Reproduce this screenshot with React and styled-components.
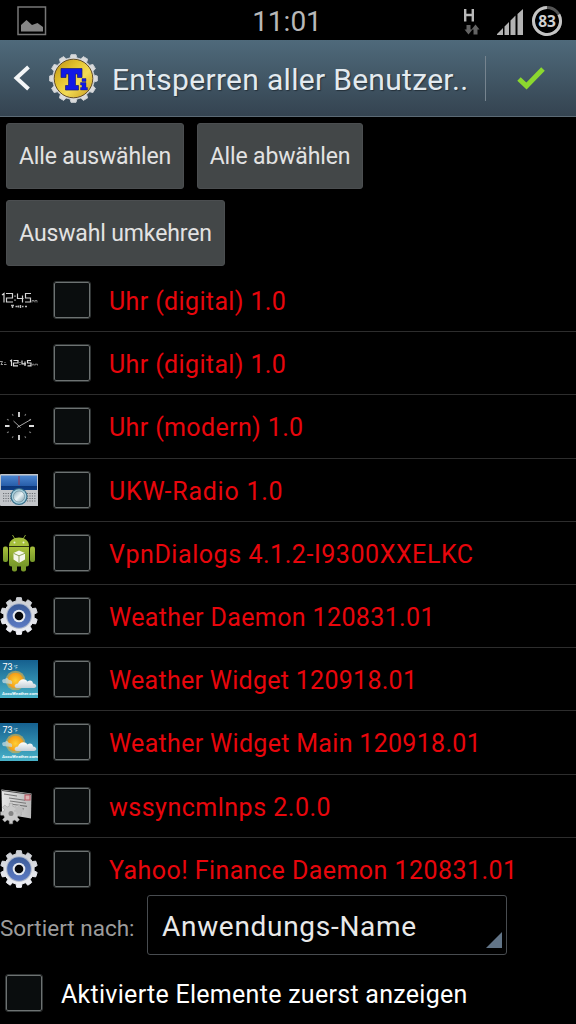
import React, { useState } from 'react';
import styled, { createGlobalStyle } from 'styled-components';

// styles
const GlobalStyle = createGlobalStyle`
  * {
    box-sizing: border-box;
  }
  body {
    margin: 0;
    background: #000;
    font-family: Roboto, 'Noto Sans', sans-serif;
  }
`

const Screen = styled.div`
  display: flex;
  flex-direction: column;
  width: 576px;
  height: 1024px;
  overflow: hidden;
  background: #000;
`

const StatusBar = styled.div`
  display: grid;
  grid-template-columns: 1fr auto 1fr;
  align-items: center;
  height: 40px;
  flex: none;
  padding: 0 13px 0 17px;
`

const StatusIcons = styled.div`
  display: flex;
  align-items: center;
  justify-content: flex-end;
`

const Clock = styled.span`
  color: #b8b8b8;
  font-size: 28px;
  line-height: 40px;
  padding: 2px 6px 0 0;
`

const Header = styled.header`
  display: flex;
  align-items: center;
  height: 77px;
  flex: none;
  padding-left: 12px;
  background: linear-gradient(#4f6a7b, #344350);
  border-bottom: 1px solid #5c6a75;
`

const BackArrow = styled.svg`
  width: 24px;
  height: 28px;
  flex: none;
  margin-right: 12px;
`

const Title = styled.h1`
  flex: 1;
  margin: 2px 0 0 13px;
  color: #e3eaef;
  font-size: 30px;
  font-weight: 400;
  letter-spacing: 0.3px;
  white-space: nowrap;
  text-shadow: 1px 1px 1px #24303a;
`

const Confirm = styled.button`
  display: flex;
  align-items: center;
  justify-content: center;
  width: 91px;
  height: 45px;
  flex: none;
  padding: 0;
  border: 0;
  border-left: 1px solid #76848f;
  background: none;
`

const Actions = styled.div`
  display: flex;
  flex-wrap: wrap;
  align-content: flex-start;
  gap: 11px 13px;
  height: 152px;
  flex: none;
  padding: 6px 6px 0;
`

const ActionButton = styled.button`
  width: ${props => props.$width}px;
  height: 66px;
  padding: 0;
  border: 1px solid #4b4e50;
  border-radius: 3px;
  background: #434748;
  color: #e2e2e2;
  font-family: inherit;
  font-size: 23px;
  letter-spacing: -0.14px;
  white-space: nowrap;
`

const List = styled.ul`
  height: 620px;
  flex: none;
  margin: 0;
  padding: 0;
  list-style: none;
  overflow: hidden;
`

const Row = styled.li`
  display: flex;
  align-items: center;
  height: 63.2px;
  border-bottom: 1px solid #2d2d2d;
`

const RowIcon = styled.svg`
  width: 38px;
  height: 38px;
  flex: none;
  margin-right: 16px;
`

const Box = styled.button`
  width: 36px;
  height: 36px;
  flex: none;
  padding: 0;
  border: 1px solid #6d7272;
  border-radius: 2px;
  outline: 1px solid #303434;
  background: ${props => (props.$checked ? '#6fae2c' : '#0a0d0e')};
`

const AppName = styled.span`
  margin: 3px 0 0 19px;
  color: #e8060c;
  font-size: 25px;
  letter-spacing: ${props => props.$spacing}px;
  white-space: nowrap;
`

const SortBar = styled.div`
  display: flex;
  align-items: center;
  height: 72px;
  flex: none;
  gap: 12px;
`

const SortLabel = styled.span`
  width: 135px;
  padding-top: 6px;
  color: #9c9c9c;
  font-size: 22.5px;
  white-space: nowrap;
`

const Spinner = styled.div`
  display: flex;
  align-items: center;
  justify-content: space-between;
  width: 360px;
  height: 60px;
  padding: 2px 4px 0 14px;
  border: 1px solid #484c50;
  border-radius: 3px;
  color: #e9e9e9;
  font-size: 28px;
  letter-spacing: 0.7px;
`

const Corner = styled.svg`
  align-self: flex-end;
  width: 16px;
  height: 16px;
  margin-bottom: 6px;
`

const Footer = styled.div`
  display: flex;
  align-items: center;
  height: 63px;
  flex: none;
  padding-left: 6px;
`

const FooterText = styled.span`
  margin: 3px 0 0 19px;
  color: #fff;
  font-size: 25px;
  letter-spacing: 0.28px;
  white-space: nowrap;
`

// Outline of a cog with flat teeth
const cogPath = (cx, cy, outer, inner, teeth) => {
  const step = (Math.PI * 2) / teeth;
  const points = [];
  for (let i = 0; i < teeth; i++) {
    const a = i * step - Math.PI / 2;
    [[-0.31, inner], [-0.2, outer], [0.2, outer], [0.31, inner]].forEach(([f, r]) => {
      const t = a + f * step;
      points.push(`${(cx + r * Math.cos(t)).toFixed(2)} ${(cy + r * Math.sin(t)).toFixed(2)}`);
    });
  }
  return `M${points.join('L')}Z`;
};

const DigitalClock = () => (
  <RowIcon viewBox="0 0 38 38">
    <path
      d="M2 14L4 12.5V21.5M6 12.5H12.5V17H6.5V21H13M15 14.5V15.7M15 18.5V19.7M17.5 12.5V17.5H23.5M22.5 14.5V21.5M31 12.5H25.5V17H30.5V21H25"
      fill="none" stroke="#d4d4d4" strokeWidth="1.2"
    />
    <path d="M32 21.5V19.5H34V21M35 21.5V19.5H37V21.5" fill="none" stroke="#999" strokeWidth=".8" />
    <path d="M11 24.5H14M12.5 24.5V27M15.5 25.5H17.5M18.5 24.5V26.5M20.5 24V27M22 25.5H23.5M25 25.5H27" stroke="#bbb" strokeWidth="1.4" />
  </RowIcon>
)

const DigitalClockSmall = () => (
  <RowIcon viewBox="0 0 38 38">
    <path d="M0 17.5H2.5L1 20.5H3M4 20.5H6.5M4.5 18.5H5.5" fill="none" stroke="#aaa" strokeWidth=".9" />
    <path
      d="M10 17L11.5 16.2V22M13.5 16.5H18V19H13.5V21.8H18M20 18V18.8M20 20V20.8M22 16.5V19.8H26M25 17.5V22M31 16.5H27.5V19H31V21.8H27.5"
      fill="none" stroke="#dcdcdc" strokeWidth="1.2"
    />
    <path d="M32.5 21.5V20.2H34V21.5M35 21.5V20.2H37.5V21.5" fill="none" stroke="#999" strokeWidth=".8" />
  </RowIcon>
)

const AnalogClock = () => (
  <RowIcon viewBox="0 0 38 38">
    <path d="M19 5V10M19 28V33M5 19H9.5M29 19H34" stroke="#ddd" strokeWidth="1.8" />
    <path
      d="M12.2 7L13.2 8.8M25.8 7L24.8 8.8M7 12.2L8.8 13.2M31 12.2L29.2 13.2M7 25.8L8.8 24.8M31 25.8L29.2 24.8M12.2 31L13.2 29.2M25.8 31L24.8 29.2"
      stroke="#777" strokeWidth="1.1"
    />
    <path d="M13.5 14L20.5 20.5M17 20.5L31 12.5" stroke="#a5a5a5" strokeWidth="1" />
  </RowIcon>
)

const Radio = () => (
  <RowIcon viewBox="0 0 38 38">
    <defs>
      <linearGradient id="radioTop" x1="0" y1="0" x2="0" y2="1">
        <stop offset="0" stopColor="#4c86d0" />
        <stop offset=".7" stopColor="#285eaa" />
        <stop offset=".7" stopColor="#0c3474" />
        <stop offset="1" stopColor="#0d3d86" />
      </linearGradient>
      <linearGradient id="radioKnob" x1="0" y1="0" x2="1" y2="1">
        <stop offset="0" stopColor="#7fa4b2" />
        <stop offset=".5" stopColor="#eaf4f6" />
        <stop offset="1" stopColor="#7899a8" />
      </linearGradient>
    </defs>
    <rect x="0" y="3" width="38.5" height="32" rx="1" fill="#c3c6ca" />
    <rect x="1" y="4.5" width="36" height="14.5" fill="url(#radioTop)" />
    <path d="M19 5V14" stroke="#aa3448" strokeWidth="1" />
    <path
      d="M3 22.5H11M3 25H11M3 27.5H11M3 30H11M27 22.5H36M27 25H36M27 27.5H36M27 30H36"
      stroke="#6c7075" strokeWidth="1.1" strokeDasharray="1.2 1.2"
    />
    <circle cx="19" cy="25.5" r="8.6" fill="#39718c" />
    <circle cx="19" cy="25.5" r="7.3" fill="#a9d1de" />
    <circle cx="19" cy="25.5" r="5.6" fill="url(#radioKnob)" stroke="#64828e" strokeWidth=".6" />
  </RowIcon>
)

const Android = () => (
  <RowIcon viewBox="0 0 38 38">
    <defs>
      <linearGradient id="droid" x1="0" y1="0" x2="0" y2="1">
        <stop offset="0" stopColor="#a8c03c" />
        <stop offset="1" stopColor="#759729" />
      </linearGradient>
    </defs>
    <g transform="translate(0 -1)">
      <path d="M12.5 2L15 6M25.5 2L23 6" stroke="#89a236" strokeWidth="1" />
      <rect x="3" y="13.5" width="5" height="15.5" rx="2" fill="url(#droid)" />
      <rect x="30" y="13.5" width="5" height="15.5" rx="2" fill="url(#droid)" />
      <rect x="12" y="29" width="5" height="9.5" rx="2" fill="#799929" />
      <rect x="21" y="29" width="5" height="9.5" rx="2" fill="#799929" />
      <path d="M9 13C9 7.5 13.5 4.5 19 4.5C24.5 4.5 29 7.5 29 13Z" fill="#a5bf3b" />
      <path d="M9 13.7H29V31Q29 33.5 26.5 33.5H11.5Q9 33.5 9 31Z" fill="url(#droid)" />
      <circle cx="14.5" cy="9.5" r="1" fill="#e9efd0" />
      <circle cx="23.5" cy="9.5" r="1" fill="#e9efd0" />
      <path d="M19 17.5L25 20V26.5L19 30L13.5 26.5V20Z" fill="#f5f7ec" />
      <path d="M13.5 20.3L19 22.8L25 20.3M19 22.8V30" fill="none" stroke="#8fa45a" strokeWidth="1" />
    </g>
  </RowIcon>
)

const Cog = () => (
  <RowIcon viewBox="0 0 38 38">
    <defs>
      <linearGradient id="cogBody" x1="0" y1="0" x2="0" y2="1">
        <stop offset="0" stopColor="#c9ccd1" />
        <stop offset="1" stopColor="#f1f2f8" />
      </linearGradient>
      <linearGradient id="cogRing" x1="0" y1="0" x2="0" y2="1">
        <stop offset="0" stopColor="#3c5c98" />
        <stop offset="1" stopColor="#5c7ac4" />
      </linearGradient>
    </defs>
    <path d={cogPath(19, 19, 18.5, 15.2, 10)} fill="url(#cogBody)" stroke="url(#cogBody)" strokeLinejoin="round" />
    <circle cx="19" cy="19" r="12.8" fill="#a9b4ca" />
    <circle cx="19" cy="19" r="11.8" fill="url(#cogRing)" />
    <circle cx="19" cy="19" r="6.3" fill="#e6eaf1" />
    <circle cx="19" cy="19" r="4.3" fill="#050608" />
  </RowIcon>
)

const Weather = () => (
  <RowIcon viewBox="0 0 38 38">
    <defs>
      <linearGradient id="sky" x1="0" y1="0" x2="0" y2="1">
        <stop offset="0" stopColor="#15608f" />
        <stop offset="1" stopColor="#48b2c8" />
      </linearGradient>
      <radialGradient id="sun">
        <stop offset="0" stopColor="#ffcf35" />
        <stop offset="1" stopColor="#f39a16" />
      </radialGradient>
      <linearGradient id="cloud" x1="0" y1="0" x2="0" y2="1">
        <stop offset="0" stopColor="#fff" />
        <stop offset="1" stopColor="#c3ced6" />
      </linearGradient>
    </defs>
    <rect width="38" height="38" fill="url(#sky)" />
    <text x="2.5" y="9.8" fontSize="9" fontFamily="Roboto" fill="#fff">73</text>
    <text x="13.5" y="9" fontSize="4.5" fontFamily="Roboto" fill="#d5e8ef">°F</text>
    <circle cx="15.5" cy="20.5" r="9.8" fill="#e4b54a" opacity=".6" />
    <circle cx="15.5" cy="20.5" r="7.8" fill="url(#sun)" />
    <path d="M3 23Q0.5 19 5 19Q7 16.5 9 20Q13 20 12 24Z" fill="#c6dbe0" opacity=".75" />
    <path d="M17 28C13.5 28 14 23.5 18 23.5C19 19 25 17.5 27.500 21.5C30 19.5 33 21 33 23.5C37.5 24 37 28 34 28Z" fill="url(#cloud)" />
    <text x="2" y="35.4" fontSize="4.4" fontWeight="700" fontFamily="Roboto" fill="#f2fbfd">AccuWeather.com</text>
  </RowIcon>
)

const SyncDocument = () => (
  <RowIcon viewBox="0 0 38 38">
    <defs>
      <linearGradient id="paper" x1="0" y1="0" x2="1" y2="0">
        <stop offset="0" stopColor="#e6e6e6" />
        <stop offset="1" stopColor="#b9b9b9" />
      </linearGradient>
    </defs>
    <path d="M1.5 2.5L31.5 6.5L31 31.5L2 26.5Z" fill="url(#paper)" />
    <path d="M2 3.5L31 7.5" stroke="#4a4a4a" strokeWidth="1" />
    <path d="M4 7L17 9M9 11L25 13.3M10 14L26 16.3M10 17L27 19.4M10 20L24 22" stroke="#777" strokeWidth="1.1" />
    <rect x="25" y="8" width="5" height="5" fill="#dab3b3" stroke="#ba5662" />
    <path d={cogPath(11, 26.5, 10.5, 7.5, 8)} fill="#c9c9c9" stroke="#989898" strokeWidth=".5" />
    <circle cx="11" cy="26.5" r="2.5" fill="#858585" />
    <path d={cogPath(19, 23, 5, 3.5, 7)} fill="#bdbdbd" />
  </RowIcon>
)

const TitaniumLogo = () => (
  <svg width="51" height="51" viewBox="0 0 51 51">
    <defs>
      <linearGradient id="gold" x1="0" y1="0" x2="1" y2="1">
        <stop offset="0" stopColor="#b98d16" />
        <stop offset=".35" stopColor="#e3c22d" />
        <stop offset=".6" stopColor="#f3db55" />
        <stop offset="1" stopColor="#c6971a" />
      </linearGradient>
    </defs>
    <path d={cogPath(25.5, 25.5, 24, 20.8, 12)} fill="#dadbdc" stroke="#c8ccd0" strokeLinejoin="round" />
    <circle cx="25.5" cy="25.5" r="19.3" fill="url(#gold)" stroke="#614b27" />
    <path
      d="M13 15.5H34V24.5H29.5V21H27.5V32.5H30.500V37H17.5V32.5H20.5V21H18V24.5H13Z"
      fill="#1119e6" stroke="#151b75" strokeWidth=".7"
    />
    <path d="M34 25.5H38V28.5H34ZM32.5 29.5H38V34.5H39.5V37H32.5V34.5H34V32H32.5Z" fill="#1119e6" stroke="#151b75" strokeWidth=".4" />
  </svg>
)

const apps = [
  { name: 'Uhr (digital) 1.0', Icon: DigitalClock },
  { name: 'Uhr (digital) 1.0', Icon: DigitalClockSmall },
  { name: 'Uhr (modern) 1.0', Icon: AnalogClock },
  { name: 'UKW-Radio 1.0', Icon: Radio, spacing: 0.75 },
  { name: 'VpnDialogs 4.1.2-I9300XXELKC', Icon: Android, spacing: 0.55 },
  { name: 'Weather Daemon 120831.01', Icon: Cog },
  { name: 'Weather Widget 120918.01', Icon: Weather, spacing: 0.28 },
  { name: 'Weather Widget Main 120918.01', Icon: Weather, spacing: 0.31 },
  { name: 'wssyncmlnps 2.0.0', Icon: SyncDocument, spacing: 0.5 },
  { name: 'Yahoo! Finance Daemon 120831.01', Icon: Cog, spacing: 0.44 },
];

const App = () => {
  const [selected, setSelected] = useState([]);
  const [activeFirst, setActiveFirst] = useState(false);

  const toggle = index => {
    setSelected(selected.includes(index) ? selected.filter(i => i !== index) : [...selected, index]);
  };

  const invert = () => {
    setSelected(apps.map((app, i) => i).filter(i => !selected.includes(i)));
  };

  return (
    <Screen>
      <GlobalStyle />
      <StatusBar>
        <svg width="30" height="30" viewBox="0 0 30 30">
          <rect x="1" y="1" width="27.5" height="27.5" fill="none" stroke="#777" strokeWidth="1.5" />
          <path d="M4 25.5V19L9.5 14L15 19L20.5 17L26 21V25.5Z" fill="#858585" />
        </svg>
        <Clock>11:01</Clock>
        <StatusIcons>
          <svg width="100" height="40" viewBox="0 0 100 40">
            <path d="M2.2 8V20.5M9.8 8V20.5M2 14H10" stroke="#b9b9b9" strokeWidth="2.4" />
            <path d="M3.5 24H7.5V28.5H9.5L5.5 33.5L1.500 28.5H3.5ZM10.5 33.5H14.5V28.5H16.5L12.5 23.5L8.5 28.5H10.5Z" fill="#636363" />
            <path d="M34 34V33L40 27V34ZM41.5 34V25.5L46 21V34ZM47.5 34V19.500L52.5 14.5V34ZM54.5 34V13L60 8V34Z" fill="#b3b3b3" />
            <circle cx="84" cy="20" r="13.5" fill="none" stroke="#555" strokeWidth="3" />
            <circle
              cx="84" cy="20" r="13.5" fill="none" stroke="#c4c4c4" strokeWidth="3"
              pathLength="100" strokeDasharray="83 17" transform="rotate(-29 84 20)"
            />
            <text x="84" y="25.5" textAnchor="middle" fontSize="15.5" fontWeight="700" fontFamily="Open Sans" fill="#d0d0d0">83</text>
          </svg>
        </StatusIcons>
      </StatusBar>

      <Header>
        <BackArrow viewBox="0 0 24 28">
          <path d="M16.500 3L4.5 14L16.5 25" fill="none" stroke="#f4f6f7" strokeWidth="4" />
        </BackArrow>
        <TitaniumLogo />
        <Title>Entsperren aller Benutzer..</Title>
        <Confirm>
          <svg width="30" height="26" viewBox="0 0 30 26">
            <path d="M3 14L10.5 21L27 4" fill="none" stroke="#8bd82f" strokeWidth="5" />
          </svg>
        </Confirm>
      </Header>

      <Actions>
        <ActionButton $width={178} onClick={() => setSelected(apps.map((app, i) => i))}>Alle auswählen</ActionButton>
        <ActionButton $width={166} onClick={() => setSelected([])}>Alle abwählen</ActionButton>
        <ActionButton $width={219} onClick={invert}>Auswahl umkehren</ActionButton>
      </Actions>

      <List>
        {apps.map(({ name, Icon, spacing }, i) => (
          <Row key={i}>
            <Icon />
            <Box $checked={selected.includes(i)} onClick={() => toggle(i)} />
            <AppName $spacing={spacing ?? 0.37}>{name}</AppName>
          </Row>
        ))}
      </List>

      <SortBar>
        <SortLabel>Sortiert nach:</SortLabel>
        <Spinner>
          Anwendungs-Name
          <Corner viewBox="0 0 16 16">
            <path d="M16 0V16H0Z" fill="#627588" />
          </Corner>
        </Spinner>
      </SortBar>

      <Footer>
        <Box $checked={activeFirst} onClick={() => setActiveFirst(!activeFirst)} />
        <FooterText>Aktivierte Elemente zuerst anzeigen</FooterText>
      </Footer>
    </Screen>
  )
}
export default App
